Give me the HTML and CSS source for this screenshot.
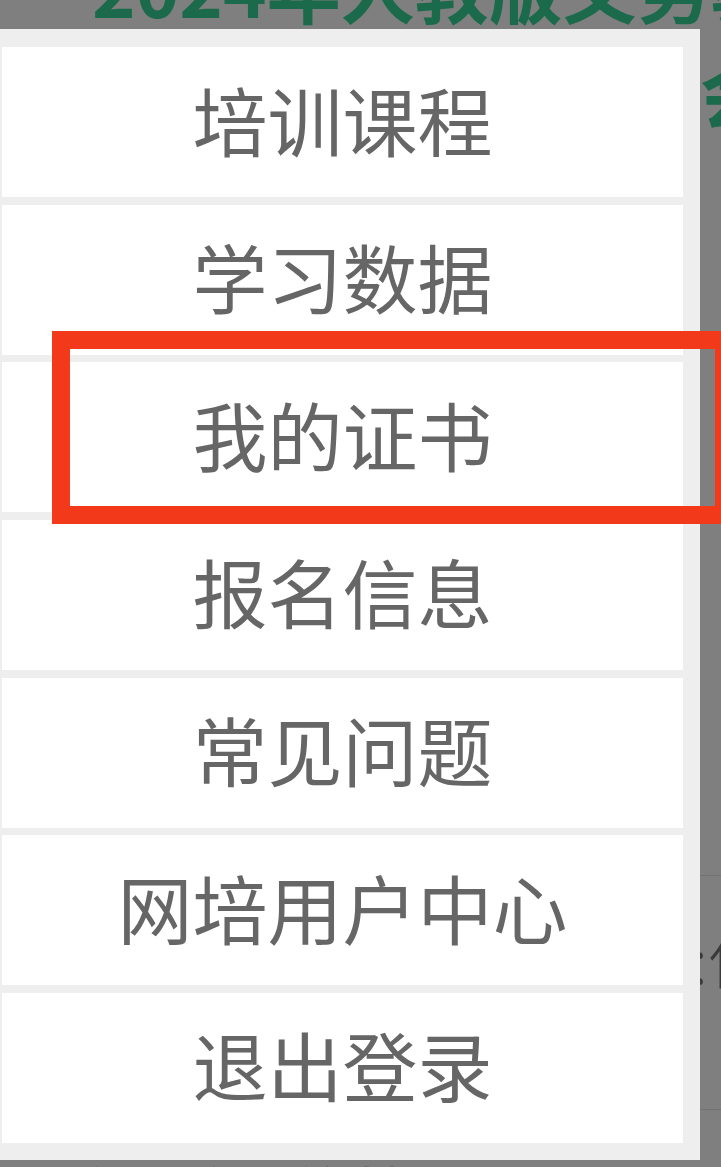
FILE: index.html
```html
<!DOCTYPE html>
<html lang="zh-CN">
<head>
<meta charset="utf-8">
<title>菜单</title>
<link rel="stylesheet" href="styles.css">
</head>
<body>
<div class="page">
  <div class="bg">
    <div class="bg-title">
      <div class="bg-line first">2024年人教版义务教育教材培训</div>
      <div class="bg-line second">课程标准解读会</div>
    </div>
    <div class="bg-table">
      <div class="bg-row"><span class="bg-cell">:作</span></div>
      <div class="bg-row last"><span class="bg-foot">教材培训的基本要求和内容介绍</span></div>
    </div>
  </div>

  <nav class="menu">
    <div class="menu-item">培训课程</div>
    <div class="menu-item">学习数据</div>
    <div class="menu-item">我的证书</div>
    <div class="menu-item">报名信息</div>
    <div class="menu-item">常见问题</div>
    <div class="menu-item">网培用户中心</div>
    <div class="menu-item">退出登录</div>
  </nav>

  <div class="highlight"></div>
</div>
</body>
</html>
```

FILE: styles.css
```css
html, body {
  margin: 0;
  padding: 0;
}

body {
  width: 721px;
  height: 1167px;
  overflow: hidden;
  background: #7f7f7f;
  font-family: "Noto Sans CJK SC", "Noto Sans", sans-serif;
}

.page {
  position: relative;
  width: 721px;
  height: 1167px;
  overflow: hidden;
}

.bg {
  display: flex;
  flex-direction: column;
}

.bg-title {
  margin-top: -66px;
  color: #1b6a4b;
  font-size: 74px;
  font-weight: 700;
  line-height: 104px;
  white-space: nowrap;
}

.bg-line.first {
  padding-left: 92px;
}

.bg-line.second {
  padding-left: 256px;
}

.bg-table {
  margin-top: 733px;
  border-top: 1px solid #727272;
}

.bg-row {
  height: 234px;
  box-sizing: border-box;
  border-bottom: 1px solid #727272;
  display: flex;
  align-items: flex-start;
  padding-top: 50px;
  padding-left: 692px;
  white-space: nowrap;
}

.bg-cell {
  color: #3a3a3a;
  font-size: 62px;
  font-weight: 300;
  line-height: 1;
}

.bg-row.last {
  border-bottom: none;
  padding-left: 60px;
  padding-top: 52px;
  height: 120px;
}

.bg-foot {
  color: #3e3e3e;
  font-size: 58px;
  line-height: 1;
}

.menu {
  position: absolute;
  left: 0;
  top: 29px;
  width: 681px;
  padding: 18px 17px 17px 2px;
  background: #eeeeee;
  display: flex;
  flex-direction: column;
  gap: 7.67px;
}

.menu-item {
  height: 150px;
  box-sizing: border-box;
  padding-bottom: 8px;
  background: #ffffff;
  display: flex;
  align-items: center;
  justify-content: center;
  color: #666666;
  font-size: 75px;
  line-height: 1;
  white-space: nowrap;
}

.highlight {
  position: absolute;
  left: 52px;
  top: 331px;
  width: 645px;
  height: 157px;
  border: 18px solid #f2391a;
}
```
